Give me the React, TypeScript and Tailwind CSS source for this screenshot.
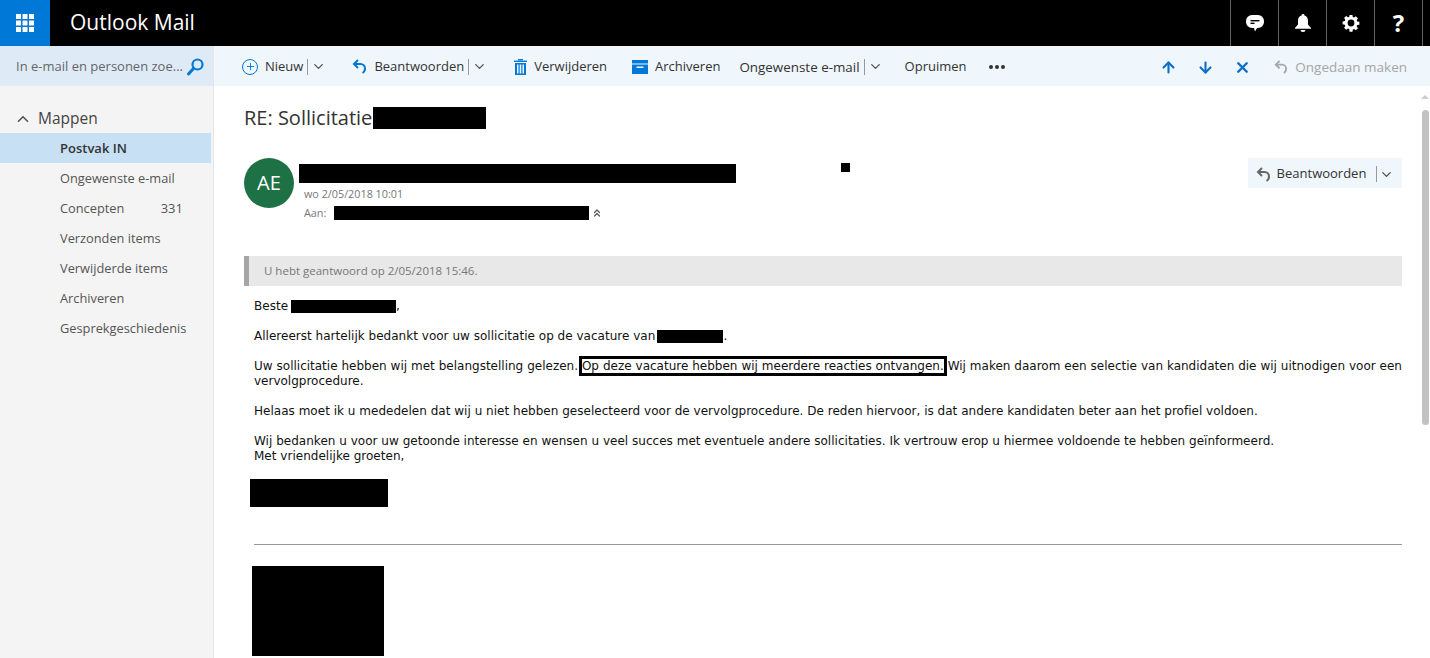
import { ArrowDown, ArrowUp, ChevronDown, ChevronUp, ChevronsUp, Plus, X } from 'lucide-react';

const ui = 'font-["Open_Sans",sans-serif]';

function Waffle() {
  return (
    <svg width="18" height="18" viewBox="0 0 18 18" fill="#fff">
      {[0, 6.5, 13].map((y) =>
        [0, 6.5, 13].map((x) => <rect key={`${x}-${y}`} x={x} y={y} width="5" height="5" />),
      )}
    </svg>
  );
}

function ReplyIcon({ color = '#0078d7', size = 15 }: { color?: string; size?: number }) {
  return (
    <svg width={size} height={size} viewBox="0 0 15 15" fill="none" stroke={color} strokeWidth="2">
      <path d="M6 1 2 5l4 4" />
      <path d="M2.5 5H8.5a4.5 4.5 0 0 1 4.5 4.5c0 2-1 3.6-2.5 4.5" />
    </svg>
  );
}

function SearchIcon() {
  return (
    <svg width="17" height="18" viewBox="0 0 17 18" fill="none" stroke="#0078d7">
      <circle cx="10.5" cy="6.5" r="5" strokeWidth="2.2" />
      <path d="M6.5 10.5 1.5 16" strokeWidth="3" strokeLinecap="round" />
    </svg>
  );
}

function TrashIcon() {
  return (
    <svg width="13" height="16" viewBox="0 0 13 16" fill="#0078d7">
      <rect x="0" y="1.6" width="13" height="1.4" />
      <rect x="4" y="0" width="5" height="1.4" />
      <path d="M1 4h11v12H1zM3 5.5v9h1.5v-9zm2.7 0v9h1.6v-9zm2.8 0v9H10v-9z" fillRule="evenodd" />
    </svg>
  );
}

function ArchiveIcon() {
  return (
    <svg width="16" height="14" viewBox="0 0 16 14" fill="#0078d7">
      <rect x="0" y="0" width="16" height="3.5" />
      <path d="M0 4.5h16V14H0zM4.5 6.5V8h7V6.5z" fillRule="evenodd" />
    </svg>
  );
}

function ChatIcon() {
  return (
    <svg width="18" height="17" viewBox="0 0 18 17">
      <path d="M6 0h6a6 6 0 0 1 6 6v1a6 6 0 0 1-6 6h-1l-2 3.5L8 13H6a6 6 0 0 1-6-6V6a6 6 0 0 1 6-6z" fill="#fff" />
      <rect x="4.5" y="5" width="9" height="1.4" fill="#000" />
      <rect x="4.5" y="7.6" width="4" height="1.4" fill="#000" />
    </svg>
  );
}

function BellIcon() {
  return (
    <svg width="16" height="18" viewBox="0 0 16 18" fill="#fff">
      <path d="M8 0a1.5 1.5 0 0 1 1.5 1.6C12 2.3 13 4.4 13 7v3.5l3 3.5v.8H0V14l3-3.5V7c0-2.6 1-4.7 3.5-5.4A1.5 1.5 0 0 1 8 0z" />
      <path d="M5.5 16h5a2.5 2 0 0 1-5 0z" />
    </svg>
  );
}

function GearIcon() {
  return (
    <svg width="18" height="18" viewBox="0 0 18 18">
      <path
        d="M7.4 0h3.2l.4 2.4 1.4.6 2-1.4 2.3 2.3-1.4 2 .6 1.4 2.4.4v3.2l-2.4.4-.6 1.4 1.4 2-2.3 2.3-2-1.4-1.4.6-.4 2.4H7.4L7 15.8l-1.4-.6-2 1.4-2.3-2.3 1.4-2-.6-1.4-2.4-.4V7.3l2.4-.4.6-1.4-1.4-2 2.3-2.3 2 1.4L7 2.4z"
        fill="#fff"
        transform="scale(.9) translate(1 1)"
      />
      <circle cx="9" cy="9" r="3.4" fill="#000" />
    </svg>
  );
}

function Caret() {
  return (
    <>
      <span className="ml-[4px] h-4 w-px bg-[#999]" />
      <ChevronDown size={15} strokeWidth={2.2} className="ml-[3px] text-[#555]" />
    </>
  );
}

function ToolButton({ icon, label, caret, className = '' }: { icon?: React.ReactNode; label: string; caret?: boolean; className?: string }) {
  return (
    <div className={`flex items-center text-[#333] ${className}`}>
      {icon}
      <span className="flex items-center">
        {label}
        {caret && <Caret />}
      </span>
    </div>
  );
}

function Redact({ className }: { className: string }) {
  return <span className={`inline-block bg-black align-middle ${className}`} />;
}

const folders = ['Ongewenste e-mail', 'Concepten', 'Verzonden items', 'Verwijderde items', 'Archiveren', 'Gesprekgeschiedenis'];

export default function App() {
  return (
    <div className={`flex h-[658px] w-[1430px] flex-col overflow-hidden bg-white ${ui}`}>
      {/* top bar */}
      <header className="flex h-[46px] shrink-0 items-center bg-black text-white">
        <div className="flex h-full w-[50px] items-center justify-center bg-[#0078d7]">
          <Waffle />
        </div>
        <div className="ml-5 flex-1 text-[21px]">Outlook Mail</div>
        <div className="mr-[7px] flex h-full border-l border-[#666]">
          <div className="flex w-[48px] items-center justify-center border-r border-[#666]"><ChatIcon /></div>
          <div className="flex w-[48px] items-center justify-center border-r border-[#666]"><BellIcon /></div>
          <div className="flex w-[48px] items-center justify-center border-r border-[#666]"><GearIcon /></div>
          <div className="flex w-[48px] items-center justify-center border-r border-[#666] text-[24px] font-bold">?</div>
        </div>
      </header>

      <div className="flex min-h-0 flex-1">
        {/* folder pane */}
        <aside className="flex w-[214px] shrink-0 flex-col border-r border-[#e6e6e6] bg-[#f4f4f4]">
          <div className="flex h-[40px] shrink-0 items-center justify-between bg-[#deebf7] pl-4 pr-[9px] pt-[2px] text-[13px] whitespace-nowrap text-[#666]">
            <span>In e-mail en personen zoe...</span>
            <SearchIcon />
          </div>
          <div className="mt-5 mb-[1px] flex h-[26px] items-center pl-[14px] text-[15.5px] text-[#444]">
            <ChevronUp size={18} strokeWidth={2.2} className="mr-[6px] text-[#555]" />
            Mappen
          </div>
          <div className="mr-[2px] flex h-[30px] items-center bg-[#c7e0f4] pl-[60px] pt-px text-[13px] font-semibold text-[#333]">
            Postvak IN
          </div>
          {folders.map((name) => (
            <div key={name} className="flex h-[30px] items-center pl-[60px] pr-[30px] pt-px text-[12.8px] text-[#555]">
              <span className="flex-1 whitespace-nowrap">{name}</span>
              {name === 'Concepten' && <span className="text-[13px]">331</span>}
            </div>
          ))}
        </aside>

        <main className="flex min-w-0 flex-1 flex-col">
          {/* toolbar */}
          <div className="flex h-[40px] shrink-0 items-center bg-[#eff6fc] pl-[28px] pr-[23px] pt-[2px] text-[13px]">
            <div className="flex items-center">
              <ToolButton
                icon={
                  <span className="mr-[7px] flex h-4 w-4 items-center justify-center rounded-full border-[1.5px] border-[#0078d7]">
                    <Plus size={11} strokeWidth={2} className="text-[#0078d7]" />
                  </span>
                }
                label="Nieuw"
                caret
              />
              <ToolButton icon={<span className="mr-[7px]"><ReplyIcon /></span>} label="Beantwoorden" caret className="ml-[26px]" />
              <ToolButton icon={<span className="mr-[7px]"><TrashIcon /></span>} label="Verwijderen" className="ml-[27px]" />
              <ToolButton icon={<span className="mr-[7px]"><ArchiveIcon /></span>} label="Archiveren" className="ml-[25px]" />
              <ToolButton label="Ongewenste e-mail" caret className="ml-[19px] text-[13.4px]" />
              <ToolButton label="Opruimen" className="ml-[22px]" />
              <div className="ml-[22px] flex gap-[2px]">
                <span className="h-1 w-1 rounded-full bg-[#333]" />
                <span className="h-1 w-1 rounded-full bg-[#333]" />
                <span className="h-1 w-1 rounded-full bg-[#333]" />
              </div>
            </div>
            <div className="ml-auto flex items-center gap-[20px] text-[#0f6fc6]">
              <ArrowUp size={17} strokeWidth={3} />
              <ArrowDown size={17} strokeWidth={3} />
              <X size={17} strokeWidth={3.4} />
              <div className="ml-[3px] flex items-center gap-[7px] text-[13.5px] text-[#a6a6a6]">
                <ReplyIcon color="#a6a6a6" size={14} />
                Ongedaan maken
              </div>
            </div>
          </div>

          <div className="flex min-h-0 flex-1">
            <div className="min-w-0 flex-1 overflow-hidden pl-[30px] pr-[18px]">
              {/* subject */}
              <div className="mt-[21px] flex h-[22px] items-center text-[20px] text-[#333]">
                RE: Sollicitatie
                <Redact className="ml-[1px] h-[22px] w-[113px]" />
              </div>

              {/* sender */}
              <div className="mt-[29px] flex h-[62px]">
                <div className="flex h-[50px] w-[50px] shrink-0 items-center justify-center rounded-full bg-[#1e7145] text-[20px] text-white">
                  AE
                </div>
                <div className="ml-[5px] flex-1 text-[10.8px] text-[#777]">
                  <div className="flex items-start">
                    <Redact className="mt-[6px] h-[19px] w-[437px]" />
                    <Redact className="ml-[105px] mt-[5px] h-[9px] w-[9px]" />
                  </div>
                  <div className="ml-[5px] mt-[3px] h-[17px]">wo 2/05/2018 10:01</div>
                  <div className="ml-[5px] mt-[2px] flex items-center">
                    Aan:
                    <Redact className="ml-[8px] h-[14px] w-[255px]" />
                    <ChevronsUp size={12} strokeWidth={2.4} className="ml-[2px] text-[#555]" />
                  </div>
                </div>
                <div className="flex h-[30px] w-[154px] items-center justify-center bg-[#eff6fc] pt-[2px] text-[13px] text-[#333]">
                  <ReplyIcon color="#666" />
                  <span className="ml-[6px]">Beantwoorden</span>
                  <span className="ml-[10px] h-4 w-px bg-[#999]" />
                  <ChevronDown size={15} strokeWidth={2.2} className="ml-[2px] text-[#555]" />
                </div>
              </div>

              {/* replied notice */}
              <div className="mt-[36px] flex h-[30px] items-center border-l-[5px] border-[#a6a6a6] bg-[#e8e8e8] pl-[15px] text-[11.5px] text-[#777]">
                U hebt geantwoord op 2/05/2018 15:46.
              </div>

              {/* message */}
              <div className='ml-[10px] mt-[13px] font-["DejaVu_Sans",sans-serif] text-[12px] leading-[15px] tracking-[0.02px] text-[#111]'>
                <p>
                  Beste <Redact className="-ml-px h-[13px] w-[105px]" />,
                </p>
                <p className="mt-[15px]">
                  Allereerst hartelijk bedankt voor uw sollicitatie op de vacature van
                  <Redact className="ml-[2px] h-[13px] w-[66px]" />.
                </p>
                <p className="mt-[15px] text-justify tracking-normal">
                  Uw sollicitatie hebben wij met belangstelling gelezen.{' '}
                  <span className="outline-[3px] outline-black">Op deze vacature hebben wij meerdere reacties ontvangen.</span>{' '}
                  Wij maken daarom een selectie van kandidaten die wij uitnodigen voor een vervolgprocedure.
                </p>
                <p className="mt-[15px]">
                  Helaas moet ik u mededelen dat wij u niet hebben geselecteerd voor de vervolgprocedure. De reden hiervoor, is dat andere kandidaten beter aan het profiel voldoen.
                </p>
                <p className="mt-[15px]">
                  Wij bedanken u voor uw getoonde interesse en wensen u veel succes met eventuele andere sollicitaties. Ik vertrouw erop u hiermee voldoende te hebben geïnformeerd.
                  <br />
                  Met vriendelijke groeten,
                </p>
                <div className="-ml-1 mt-[15px] h-[28px] w-[138px] bg-black" />
                <div className="mt-[37px] h-px bg-[#999]" />
                <div className="-ml-[2px] mt-[21px] h-[90px] w-[132px] bg-black" />
              </div>
            </div>

            {/* scrollbar */}
            <div className="flex w-[10px] shrink-0 flex-col items-center">
              <div className="mt-[9px] h-0 w-0 border-x-[4px] border-b-[4px] border-x-transparent border-b-[#cdcdcd]" />
              <div className="mt-[11px] h-[315px] w-[7px] rounded-full bg-[#c2c2c2]" />
            </div>
          </div>
        </main>
      </div>
    </div>
  );
}
